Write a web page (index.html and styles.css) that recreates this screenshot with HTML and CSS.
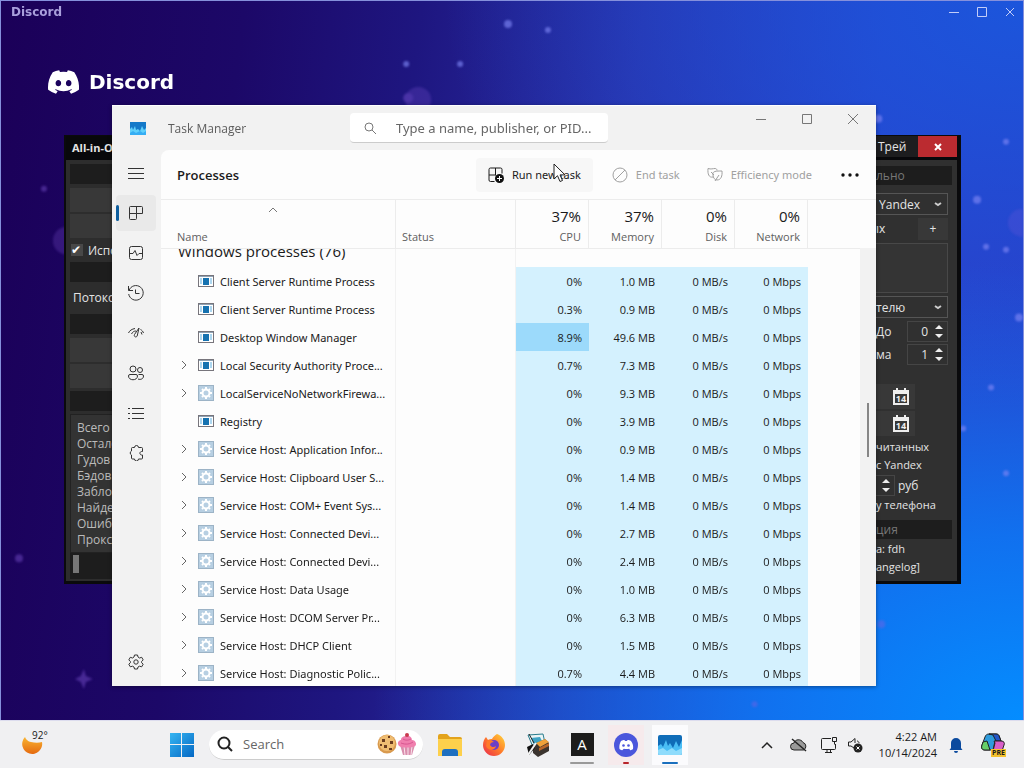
FILE: index.html
```html
<!DOCTYPE html>
<html lang="en">
<head>
    <meta charset="UTF-8">
    <meta name="viewport" content="width=device-width, initial-scale=1.0">
    <title>Desktop</title>
    <link rel="stylesheet" href="styles.css">
</head>
<body>
    <main class="desktop">
        <!-- Discord, maximised behind everything -->
        <section class="discord">
            <svg class="stars" viewBox="0 0 1024 720" preserveAspectRatio="none" aria-hidden="true">
                <g fill="#7f86f5" opacity="0.65">
                    <circle cx="508" cy="23" r="4"/><circle cx="548" cy="29" r="3"/>
                    <circle cx="406" cy="63" r="3"/><circle cx="460" cy="63" r="3"/>
                    <circle cx="879" cy="118" r="4"/><circle cx="1007" cy="141" r="3"/>
                    <circle cx="978" cy="199" r="4"/><circle cx="987" cy="246" r="3"/>
                    <circle cx="1007" cy="249" r="3"/><circle cx="1020" cy="317" r="4"/>
                    <circle cx="992" cy="387" r="3"/><circle cx="1007" cy="473" r="3"/>
                    <circle cx="964" cy="428" r="3"/>
                </g>
                <g fill="#8a5fe0" opacity="0.4">
                    <circle cx="43" cy="188" r="3"/><circle cx="18" cy="558" r="4"/>
                    <path d="M83 669l2 7 7 3-7 3-2 7-3-7-6-3 6-3z"/>
                    <circle cx="418" cy="99" r="13" opacity="0.6"/><circle cx="408" cy="97" r="5"/>
                    <circle cx="1023" cy="222" r="14" opacity="0.5"/>
                    <circle cx="66" cy="240" r="14" opacity="0.6"/>
                    <circle cx="882" cy="624" r="4"/><circle cx="755" cy="704" r="3"/>
                </g>
            </svg>
            <header class="discord-title">
                <span>Discord</span>
                <div class="discord-controls">
                    <button aria-label="Minimize"><svg width="12" height="12" viewBox="0 0 12 12"><path d="M1 6.5h10"/></svg></button>
                    <button aria-label="Maximize"><svg width="12" height="12" viewBox="0 0 12 12"><path d="M1.500 1.500h9v9h-9z"/></svg></button>
                    <button aria-label="Close"><svg width="12" height="12" viewBox="0 0 12 12"><path d="M2 2l8 8M10 2l-8 8"/></svg></button>
                </div>
            </header>
            <div class="discord-brand">
                <svg width="31" height="24" viewBox="0 0 127 96" fill="#fff"><path d="M107.700 8.070A105.150 105.150 0 0 0 81.470 0a72.060 72.060 0 0 0-3.360 6.830 97.680 97.680 0 0 0-29.110 0A72.370 72.370 0 0 0 45.640 0a105.890 105.890 0 0 0-26.250 8.090C2.790 32.650-1.710 56.600.54 80.210a105.730 105.730 0 0 0 32.170 16.150 77.700 77.700 0 0 0 6.890-11.110 68.420 68.420 0 0 1-10.850-5.180c.91-.66 1.800-1.340 2.660-2a75.570 75.570 0 0 0 64.320 0c.87.71 1.760 1.390 2.660 2a68.680 68.680 0 0 1-10.870 5.190 77 77 0 0 0 6.890 11.100 105.250 105.250 0 0 0 32.190-16.140c2.640-27.380-4.510-51.110-18.900-72.150zM42.450 65.690C36.180 65.690 31 60 31 53s5-12.740 11.430-12.740S54 46 53.890 53s-5.050 12.690-11.440 12.690zm42.240 0C78.410 65.690 73.250 60 73.250 53s5-12.740 11.440-12.740S96.230 46 96.120 53s-5.040 12.690-11.430 12.690z"/></svg>
                <span>Discord</span>
            </div>
        </section>

        <!-- All-in-One window -->
        <section class="aio">
            <header class="aio-title">
                <h2>All-in-One</h2>
                <div class="aio-actions">
                    <button class="aio-tray">Трей</button>
                    <button class="aio-close" aria-label="Закрыть"><svg width="8" height="8" viewBox="0 0 8 8"><path d="M1 1l6 6M7 1l-6 6" stroke="#fff" stroke-width="2"/></svg></button>
                </div>
            </header>
            <div class="aio-body">
                <div class="aio-left">
                    <div class="band"></div>
                    <button class="flat" aria-label="База"></button>
                    <button class="flat" aria-label="Прокси"></button>
                    <label class="aio-check"><input type="checkbox" checked>Использовать</label>
                    <div class="band"></div>
                    <div class="aio-label">Потоков</div>
                    <div class="band"></div>
                    <button class="flat" aria-label="Старт"></button>
                    <button class="flat" aria-label="Стоп"></button>
                    <div class="band last"></div>
                    <ul class="stats">
                        <li>Всего</li>
                        <li>Осталось</li>
                        <li>Гудов</li>
                        <li>Бэдов</li>
                        <li>Заблок</li>
                        <li>Найдено</li>
                        <li>Ошибок</li>
                        <li>Прокси</li>
                    </ul>
                    <div class="aio-progress"><span></span></div>
                </div>
                <div class="aio-right">
                    <div class="band">льно</div>
                    <div class="aio-select">
                        <select aria-label="Сервис"><option>Yandex</option></select>
                        <svg width="8" height="5" viewBox="0 0 8 5"><path d="M1 1l3 2 3-2"/></svg>
                    </div>
                    <div class="aio-row"><span>ıх</span><button class="flat plus">+</button></div>
                    <textarea class="aio-text" aria-label="Список"></textarea>
                    <div class="aio-select sort-by">
                        <select aria-label="Сортировка"><option>телю</option></select>
                        <svg width="8" height="5" viewBox="0 0 8 5"><path d="M1 1l3 2 3-2"/></svg>
                    </div>
                    <div class="aio-row">
                        <label for="till">До</label>
                        <span class="spin"><input id="till" type="text" value="0"><svg width="10" height="15" viewBox="0 0 10 15"><path d="M1 5l4-4 4 4zM1 10l4 4 4-4z"/></svg></span>
                    </div>
                    <div class="aio-row">
                        <label for="sum">ма</label>
                        <span class="spin"><input id="sum" type="text" value="1"><svg width="10" height="15" viewBox="0 0 10 15"><path d="M1 5l4-4 4 4zM1 10l4 4 4-4z"/></svg></span>
                    </div>
                    <div class="dates">
                        <button class="date" aria-label="Дата от"><svg width="16" height="17" viewBox="0 0 16 17"><path d="M1 3h14v13H1zM4 0v4M12 0v4" fill="none" stroke="#eee" stroke-width="2"/><path d="M1 3h14v3H1z" fill="#eee"/><text x="8" y="14">14</text></svg></button>
                        <button class="date" aria-label="Дата до"><svg width="16" height="17" viewBox="0 0 16 17"><path d="M1 3h14v13H1zM4 0v4M12 0v4" fill="none" stroke="#eee" stroke-width="2"/><path d="M1 3h14v3H1z" fill="#eee"/><text x="8" y="14">14</text></svg></button>
                    </div>
                    <div class="aio-line">читанных</div>
                    <div class="aio-line">с Yandex</div>
                    <div class="aio-row rub">
                        <span class="spin small"><svg width="10" height="15" viewBox="0 0 10 15"><path d="M1 5l4-4 4 4zM1 10l4 4 4-4z"/></svg></span>
                        <span>руб</span>
                    </div>
                    <div class="aio-line">у телефона</div>
                    <div class="band info">ция</div>
                    <div class="aio-line">а: fdh</div>
                    <a class="aio-line" href="#">angelog]</a>
                </div>
            </div>
        </section>

        <!-- Task Manager -->
        <section class="tm">
            <header class="tm-title">
                <svg class="tm-logo" width="16" height="13" viewBox="0 0 16 13"><rect width="16" height="13" fill="#1479c9"/><path d="M0 7l2-2 1 3 2-4 1 4 2-1 2 2 2-5 2 4 2-2v7H0z" fill="#5fd0fb"/><path d="M0 11l3-2 3 2 4-2 3 2 3-2v4H0z" fill="#36aef4"/></svg>
                <h1>Task Manager</h1>
                <label class="tm-search">
                    <svg width="12" height="12" viewBox="0 0 12 12"><circle cx="5" cy="5" r="4"/><path d="M8 8l4 4"/></svg>
                    <input type="text" placeholder="Type a name, publisher, or PID..." aria-label="Search processes">
                </label>
                <div class="tm-controls">
                    <button aria-label="Minimize"><svg width="12" height="12" viewBox="0 0 12 12"><path d="M1 6.500h10"/></svg></button>
                    <button aria-label="Maximize"><svg width="12" height="12" viewBox="0 0 12 12"><path d="M1.500 1.500h9v9h-9z"/></svg></button>
                    <button aria-label="Close"><svg width="12" height="12" viewBox="0 0 12 12"><path d="M1 1l10 10M11 1L1 11"/></svg></button>
                </div>
            </header>
            <div class="tm-body">
                <nav class="tm-nav">
                    <button aria-label="Menu"><svg width="16" height="16" viewBox="0 0 16 16"><path d="M0 3.500h16M0 8.500h16M0 13.500h16"/></svg></button>
                    <button class="active" aria-label="Processes"><svg width="16" height="16" viewBox="0 0 16 16"><path d="M2.500 1.500h11a1 1 0 0 1 1 1v6h-6v5a1 1 0 0 1-1 1h-5a1 1 0 0 1-1-1v-11a1 1 0 0 1 1-1zM8.500 1.500v7M1.500 8.500h7"/></svg></button>
                    <button aria-label="Performance"><svg width="16" height="16" viewBox="0 0 16 16"><rect x="1.500" y="1.500" width="13" height="13" rx="2"/><path d="M2 8.500h3l2-3 2 5 2-2h3"/></svg></button>
                    <button aria-label="App history"><svg width="16" height="16" viewBox="0 0 16 16"><path d="M.5 1v4.500H5M1 5.500a7.300 7.300 0 1 1-.3 3.500M7.500 4.500v4h4"/></svg></button>
                    <button aria-label="Startup apps"><svg width="16" height="16" viewBox="0 0 16 16"><path d="M.5 8C1.500 5.500 4 4 7 3.500M12.500 4.500C14 5.300 15 6.500 15.500 8M3.500 9C4.500 7 6 6 8 6M13 7l1 2.500M11 3L6.500 9.500c-1 2 1.500 3.500 2.700 1.500z"/></svg></button>
                    <button aria-label="Users"><svg width="16" height="16" viewBox="0 0 16 16"><circle cx="5" cy="4" r="3"/><circle cx="12" cy="5" r="2.500"/><path d="M.5 11a1.500 1.500 0 0 1 1.500-1.500h6A1.500 1.500 0 0 1 9.500 11c0 5-9 5-9 0zM10.500 9.500H14a1.500 1.500 0 0 1 1.500 1.500c0 3-3 4-5.500 3"/></svg></button>
                    <button aria-label="Details"><svg width="16" height="16" viewBox="0 0 16 16"><path d="M4 3.500h12M4 8.500h12M4 13.500h12M0 3.500h2M0 8.500h2M0 13.500h2"/></svg></button>
                    <button aria-label="Services"><svg width="16" height="16" viewBox="0 0 16 16"><path d="M6.500 2.500a2 2 0 0 1 4 0h3a1 1 0 0 1 1 1v3c-3.500-.5-3.500 4 0 3.500v3a1 1 0 0 1-1 1h-3a2 2 0 0 1-4 0h-2a1 1 0 0 1-1-1v-3a2.200 2.200 0 0 1 0-4V3.500a1 1 0 0 1 1-1z"/></svg></button>
                    <button class="settings" aria-label="Settings"><svg width="16" height="16" viewBox="0 0 16 16"><path d="M6.500 1h3l.5 2 1.500 1 2.200-.7 1.500 2.600L13.600 7.500v1.200l1.600 1.500-1.500 2.600-2.200-.6-1.500.8-.5 2h-3L6 13l-1.500-.8-2.200.6-1.500-2.600 1.600-1.500V7.500L.8 5.900l1.500-2.600L4.500 4 6 3z"/><circle cx="8" cy="8" r="2.200"/></svg></button>
                </nav>
                <div class="tm-main">
                    <div class="tm-toolbar">
                        <h2>Processes</h2>
                        <button class="run">
                            <svg width="16" height="16" viewBox="0 0 16 16"><path d="M6.500 14.500h-4a1.500 1.500 0 0 1-1.500-1.500V2.500A1.500 1.500 0 0 1 2.500 1h10A1.500 1.500 0 0 1 14 2.500v4M7.500 1v7M1 8h7"/><circle cx="11.500" cy="11.500" r="4.500" fill="#111" stroke="none"/><path d="M9 11.500h5M11.500 9v5" stroke="#fff"/></svg>
                            Run new task
                        </button>
                        <button disabled>
                            <svg width="16" height="16" viewBox="0 0 16 16"><circle cx="8" cy="8" r="7"/><path d="M3 13L13 3"/></svg>
                            End task
                        </button>
                        <button disabled>
                            <svg width="16" height="16" viewBox="0 0 16 16"><path d="M6 10C2 11 .5 7 1 1.500c3 1 5 0 7 0 1 0 2 .5 2 2M6 8c-1-4 3-4 9-4 .5 5-1 9-5 9-2 0-4-2-4-5zM8 14l4-6M4 5l3 3"/></svg>
                            Efficiency mode
                        </button>
                        <button class="more" aria-label="More options"><svg width="18" height="4" viewBox="0 0 18 4"><circle cx="2" cy="2" r="1.700"/><circle cx="9" cy="2" r="1.700"/><circle cx="16" cy="2" r="1.700"/></svg></button>
                    </div>
                    <div class="tm-list">
                        <table>
                            <thead>
                                <tr>
                                    <th class="col-name"><svg class="sort" width="10" height="6" viewBox="0 0 10 6"><path d="M1 5l4-4 4 4"/></svg><small>Name</small></th>
                                    <th class="col-status"><small>Status</small></th>
                                    <th class="num"><b>37%</b><small>CPU</small></th>
                                    <th class="num"><b>37%</b><small>Memory</small></th>
                                    <th class="num"><b>0%</b><small>Disk</small></th>
                                    <th class="num"><b>0%</b><small>Network</small></th>
                                    <th class="rest"></th>
                                </tr>
                            </thead>
                            <tbody id="processes">
                                <tr class="group">
                                    <td><div class="group-name"><span>Windows processes (76)</span></div></td>
                                    <td></td><td></td><td></td><td></td><td></td><td></td>
                                </tr>
                            </tbody>
                        </table>
                        <div class="scrollbar"><span></span></div>
                    </div>
                </div>
            </div>
        </section>

        <svg class="cursor" width="13" height="20" viewBox="0 0 13 20"><path d="M1 1v15l3.500-3.300L7 18.500l2.500-1-2.500-5.600h5z" fill="#fff" stroke="#222"/></svg>
    </main>

    <footer class="taskbar">
        <button class="weather" aria-label="Weather 92 degrees">
            <svg width="22" height="22" viewBox="0 0 22 22"><defs><linearGradient id="sun" x2="0" y2="1"><stop offset="0" stop-color="#f9b532"/><stop offset="1" stop-color="#e56a10"/></linearGradient></defs><path d="M3 3a8 8 0 0 0 6 5c4 1 8 1 11 0a10 10 0 1 1-17-5z" fill="url(#sun)"/></svg>
            <span>92°</span>
        </button>
        <div class="apps">
            <button aria-label="Start"><svg width="24" height="24" viewBox="0 0 24 24"><defs><linearGradient id="win" x2="1" y2="1"><stop offset="0" stop-color="#35b5f2"/><stop offset="1" stop-color="#0568c4"/></linearGradient></defs><path d="M0 0h11v11H0zM12 0h12v11H12zM0 12h11v12H0zM12 12h12v12H12z" fill="url(#win)"/></svg></button>
            <label class="search">
                <svg width="16" height="16" viewBox="0 0 16 16"><circle cx="7" cy="7" r="5.500"/><path d="M11 11l4 4"/></svg>
                <input type="text" placeholder="Search" aria-label="Search">
                <svg class="treats" width="40" height="24" viewBox="0 0 40 24">
                    <circle cx="10" cy="12" r="9.500" fill="#d99a4e"/><circle cx="10" cy="11" r="8" fill="#efbd72"/>
                    <path d="M5 7h3v3H5zM11 4h2v2h-2zM13 9h3v3h-3zM7 13h3v3H7zM12 16h3v2h-3zM3 12h2v2H3z" fill="#6b3d1f"/>
                    <path d="M23 13h15l-3 10h-9z" fill="#d98fae"/><path d="M27 14l1 9M31 14v9M35 14l-1 9" stroke="#fbe2ea"/>
                    <path d="M22 14c-3-4 1-6 2-6 0-3 3-4 5-4 3-1 6 1 6 4 4 0 5 5 3 6-4 2-12 2-16 0z" fill="#f07fae"/><path d="M24 11c5 2 9 1 12-1M26 7c3 2 6 1 8 0" stroke="#d85590" fill="none"/><circle cx="30" cy="3" r="2" fill="#c83a4e"/>
                </svg>
            </label>
            <button aria-label="File Explorer"><svg width="26" height="24" viewBox="0 0 26 24"><path d="M1 3a2 2 0 0 1 2-2h7l3 3h10a2 2 0 0 1 2 2v16H1z" fill="#e3a31c"/><path d="M1 6h24v17H1z" fill="#fdd04c"/><path d="M5 23v-4a3 3 0 0 1 3-3h10a3 3 0 0 1 3 3v4z" fill="#1d6fc0"/></svg></button>
            <button aria-label="Firefox"><svg width="24" height="24" viewBox="0 0 24 24"><defs><linearGradient id="fox" x1="1" x2="0" y2="1"><stop offset="0" stop-color="#ffd93b"/><stop offset="0.500" stop-color="#ff7a2a"/><stop offset="1" stop-color="#e8264f"/></linearGradient></defs><path d="M15 1c5 2 8 6 8 11a11 11 0 0 1-22 0c0-3 1-6 3-8l2 3c1-1 3-1 4-1 1-2 3-4 5-5z" fill="url(#fox)"/><circle cx="12" cy="12" r="5" fill="#6b3fc6"/><path d="M5 8c3-2 6 0 7 1-2 0-4 1-4 3 1 2 4 3 6 1-1 5-8 5-10 0z" fill="#ff7a2a"/></svg></button>
            <button aria-label="Tools"><svg width="24" height="24" viewBox="0 0 24 24"><path d="M2 2l15-1 2 9-12 4z" fill="#e9f4f6" stroke="#287c8d"/><path d="M5 5l9-1 2 4-8 4z" fill="#3fa3c4"/><path d="M7 12l12-6 4 4v8l-11 6-5-4z" fill="#3b342f"/><path d="M10 10l9-4 4 3-9 5z" fill="#f0a13a"/><path d="M13 15l10-5v3l-10 5z" fill="#b76529"/><path d="M1 14l6-3 2 4-6 7z" fill="#111"/><path d="M2 22l8-12" stroke="#f4f4f4" stroke-width="2"/><path d="M3 1l5 9" stroke="#222"/></svg></button>
            <button class="open" aria-label="All-in-One"><span class="a-icon">A</span></button>
            <button class="open alert" aria-label="Discord"><svg width="24" height="24" viewBox="0 0 24 24"><circle cx="12" cy="12" r="12" fill="#4b56dc"/><path d="M7 8c2-1 3-1.300 3.500-1l.5 1h2l.5-1c.5-.3 2 0 3.500 1 2 3 2.500 5 2 8-1 1-2.500 1.500-3 1l-.8-1.300c-2 .5-3.400.5-5.400 0L8.500 17c-.5.500-2 0-3-1-.5-3 0-5 1.500-8z" fill="#fff"/><circle cx="9.500" cy="12.500" r="1.300" fill="#4b56dc"/><circle cx="14.500" cy="12.500" r="1.300" fill="#4b56dc"/></svg></button>
            <button class="open current" aria-label="Task Manager"><svg width="24" height="20" viewBox="0 0 24 20"><rect width="24" height="20" rx="2" fill="#0f6cb8"/><path d="M0 11l3-2 2 3 3-7 2 6 2-3 3 5 3-7 3 6 3-7v13a2 2 0 0 1-2 2H2a2 2 0 0 1-2-2z" fill="#49bdf5"/><path d="M0 15l5-2 4 3 5-3 4 3 6-3v5a2 2 0 0 1-2 2H2a2 2 0 0 1-2-2z" fill="#8fdcfc"/></svg></button>
        </div>
        <div class="tray">
            <button class="hidden-icons" aria-label="Show hidden icons"><svg width="12" height="8" viewBox="0 0 12 8"><path d="M1 7l5-5 5 5" stroke-width="1.500"/></svg></button>
            <button class="cloud" aria-label="OneDrive"><svg width="18" height="14" viewBox="0 0 18 14"><path d="M4 12a3.500 3.500 0 0 1 0-7c1-4 7-4.500 9-.5a4 4 0 0 1 .5 7.500z" fill="#999"/><path d="M2 1l14 12" stroke-width="1.500"/></svg></button>
            <button aria-label="Network"><svg width="18" height="18" viewBox="0 0 18 18"><path d="M11 2.500H2.500a1 1 0 0 0-1 1v9a1 1 0 0 0 1 1h12a1 1 0 0 0 1-1V8M5 16.500h7M7 13.500v3M10.500 13.500v3M12.500 1.500h4v4h-4zM14.500 5.500v3"/></svg></button>
            <button class="volume" aria-label="Volume muted"><svg width="16" height="16" viewBox="0 0 16 16"><path d="M7 11L4 9H1.500V5H4l4-3.500V6M10 4c1 0 2 1 2 2"/><circle cx="11" cy="11" r="4.500" fill="#222" stroke="none"/><path d="M9.500 9.500l3 3M12.500 9.500l-3 3" stroke="#fff"/></svg></button>
            <div class="clock"><time>4:22 AM</time><time>10/14/2024</time></div>
            <button class="bell" aria-label="Notifications"><svg width="14" height="16" viewBox="0 0 14 16"><path d="M2 11V6a5 5 0 0 1 10 0v5l1.500 2H.5zM5 14h4a2 2 0 0 1-4 0z" fill="#0b4a9e" stroke="none"/></svg></button>
            <button class="copilot" aria-label="Copilot preview">
                <svg width="24" height="24" viewBox="0 0 24 24" stroke="none"><path d="M8 1h7c2 0 3 1 3.500 3L20 8h-6l-2 9H4c-3 0-4-2-3-5l3-8c.6-2 2-3 4-3z" fill="#2f9bdc"/><path d="M8 1h7c2 0 3 1 3.500 3L20 8h-5L12 2z" fill="#2456c8"/><path d="M2 9l4-1 3 9H4c-3 0-4-2-3-5z" fill="#67cf68"/><path d="M13 8h7c3 0 4 2 3 4l-2 6h-9l2-8z" fill="#d85fc8"/></svg>
                <span>PRE</span>
            </button>
        </div>
    </footer>

    <script>
        // name, icon, expandable, cpu, memory
        const processes = [
            ["Client Server Runtime Process", "app", false, "0%", "1.0 MB"],
            ["Client Server Runtime Process", "app", false, "0.3%", "0.9 MB"],
            ["Desktop Window Manager", "app", false, "8.9%", "49.6 MB"],
            ["Local Security Authority Proce...", "app", true, "0.7%", "7.3 MB"],
            ["LocalServiceNoNetworkFirewa...", "gear", true, "0%", "9.3 MB"],
            ["Registry", "app", false, "0%", "3.9 MB"],
            ["Service Host: Application Infor...", "gear", true, "0%", "0.9 MB"],
            ["Service Host: Clipboard User S...", "gear", true, "0%", "1.4 MB"],
            ["Service Host: COM+ Event Sys...", "gear", true, "0%", "1.4 MB"],
            ["Service Host: Connected Devi...", "gear", true, "0%", "2.7 MB"],
            ["Service Host: Connected Devi...", "gear", true, "0%", "2.4 MB"],
            ["Service Host: Data Usage", "gear", true, "0%", "1.0 MB"],
            ["Service Host: DCOM Server Pr...", "gear", true, "0%", "6.3 MB"],
            ["Service Host: DHCP Client", "gear", true, "0%", "1.5 MB"],
            ["Service Host: Diagnostic Polic...", "gear", true, "0.7%", "4.4 MB"]
        ];

        const icons = {
            app: '<svg width="16" height="12" viewBox="0 0 16 12"><rect x="0.5" y="0.5" width="15" height="11" fill="#fff" stroke="#77757c"/><path d="M1 1h14v1H1z" fill="#8fa3b5"/><path d="M5 3h6v7H5z" fill="#1672b0"/><path d="M2 4h2M2 6h2M2 8h2M12 4h2M12 6h2M12 8h2" stroke="#5aaee0"/></svg>',
            gear: '<svg width="16" height="16" viewBox="0 0 16 16"><rect x="0.5" y="0.5" width="15" height="15" fill="#b7cfe2" stroke="#9cb3c6"/><circle cx="8" cy="8" r="3.5" fill="none" stroke="#fff" stroke-width="2"/><path d="M8 2v2M8 12v2M2 8h2M12 8h2M4 4l1 1M11 11l1 1M12 4l-1 1M4 12l1-1" stroke="#fff" stroke-width="2"/></svg>'
        };
        const chevron = '<svg width="6" height="10" viewBox="0 0 6 10"><path d="M1 1l4 4-4 4" fill="none" stroke="#666"/></svg>';

        const body = document.getElementById('processes');
        processes.forEach(([name, icon, expandable, cpu, memory]) => {
            const row = document.createElement('tr');
            row.innerHTML = `
                <td><div class="process">
                    <span class="expand">${expandable ? chevron : ''}</span>
                    <span class="icon">${icons[icon]}</span>
                    <span>${name}</span>
                </div></td>
                <td></td>
                <td class="usage ${parseFloat(cpu) > 5 ? 'high' : ''}">${cpu}</td>
                <td class="usage">${memory}</td>
                <td class="usage">0 MB/s</td>
                <td class="usage">0 Mbps</td>
                <td></td>`;
            body.appendChild(row);
        });
    </script>
</body>
</html>
```
FILE: styles.css
```css
* {
    box-sizing: border-box;
}
body {
    margin: 0;
    height: 100vh;
    display: flex;
    flex-direction: column;
    overflow: hidden;
    font-family: "Open Sans", "Noto Sans", sans-serif;
    font-size: 12px;
    color: #1a1a1a;
}
button {
    font: inherit;
    color: inherit;
    border: none;
    background: none;
    padding: 0;
}
input, select, textarea {
    font: inherit;
    color: inherit;
    border: none;
    background: none;
    padding: 0;
    outline: none;
    min-width: 0;
}
h1, h2, ul {
    margin: 0;
    padding: 0;
    font-weight: normal;
}
svg {
    display: block;
    flex-shrink: 0;
}
.desktop {
    flex: 1;
    position: relative;
    min-height: 0;
}

/* Discord */
.discord {
    height: 100%;
    position: relative;
    border: 1px solid #8590dc;
    border-bottom: none;
    background:
        radial-gradient(ellipse at 100% 100%, #048dff 0%, rgba(12, 122, 246, 0.85) 18%, rgba(30, 80, 220, 0) 45%),
        radial-gradient(ellipse at 100% 0%, rgba(26, 88, 222, 0.9) 0%, rgba(36, 72, 220, 0) 40%),
        linear-gradient(97deg, #1b0058 0%, #1c0868 22%, #1e1680 38%, #2a30aa 58%, #2b3ec8 80%, #2b3cc6 100%);
}
.stars {
    position: absolute;
    inset: 0;
    width: 100%;
    height: 100%;
    filter: blur(1px);
}
.discord-title {
    position: relative;
    display: flex;
    justify-content: space-between;
    align-items: center;
    height: 21px;
    padding: 0 7px 0 10px;
    font: bold 12px "DejaVu Sans", sans-serif;
    color: #a99fdc;
}
.discord-controls {
    display: flex;
    gap: 16px;
}
.discord-controls svg {
    fill: none;
    stroke: #c3cdf8;
}
.discord-brand {
    position: relative;
    display: flex;
    align-items: center;
    gap: 10px;
    margin: 48px 0 0 47px;
    font: bold 20px "DejaVu Sans", sans-serif;
    color: #fff;
}

/* All-in-One */
.aio {
    position: absolute;
    top: 135px;
    right: 63px;
    bottom: 136px;
    left: 64px;
    display: flex;
    flex-direction: column;
    background: #2d2d2d;
    border: 2px solid #0a0a0c;
    border-width: 1px 4px 3px 2px;
    color: #e4e4e4;
}
.aio-title {
    display: flex;
    justify-content: space-between;
    height: 24px;
    background: #08080b;
}
.aio-title h2 {
    padding-left: 6px;
    font-size: 11px;
    font-weight: bold;
    line-height: 24px;
}
.aio-actions {
    display: flex;
    height: 21px;
}
.aio-tray {
    width: 42px;
    padding-left: 2px;
    text-align: left;
    background: #1d1d1f;
}
.aio-close {
    width: 39px;
    background: #bb2b30;
    display: flex;
    align-items: center;
    justify-content: center;
}
.aio-body {
    flex: 1;
    display: flex;
    justify-content: space-between;
    min-height: 0;
}
.aio-left {
    width: 120px;
    padding: 4px 0 0 4px;
    display: flex;
    flex-direction: column;
}
.band {
    height: 20px;
    flex-shrink: 0;
    line-height: 20px;
    background: #1d1d1d;
    color: #777;
}
.band.last {
    margin-top: 3px;
}
.flat {
    height: 24px;
    margin-top: 2px;
    flex-shrink: 0;
    background: #383838;
}
.aio-left .band + .flat {
    margin-top: 4px;
}
.aio-check {
    display: flex;
    align-items: center;
    gap: 5px;
    height: 24px;
    padding-left: 1px;
}
.aio-check input {
    appearance: none;
    width: 12px;
    height: 12px;
    flex-shrink: 0;
    margin: 0;
    background: #484848;
}
.aio-check input:checked::before {
    content: "✔";
    display: block;
    font: 12px/12px "DejaVu Sans", sans-serif;
    color: #fff;
}
.aio-label {
    height: 32px;
    line-height: 32px;
    padding-left: 3px;
}
.stats {
    list-style: none;
    margin-top: 3px;
    padding: 5px 0 4px 6px;
    background: #333;
    border: 1px solid #222;
    color: #bbb;
    line-height: 16px;
}
.aio-progress {
    height: 26px;
    padding: 2px 3px;
    background: #1d1d1d;
}
.aio-progress span {
    display: block;
    width: 6px;
    height: 18px;
    background: #777;
}
.aio-right {
    width: 81px;
    padding: 6px 9px 0 0;
    display: flex;
    flex-direction: column;
    background: #303030;
}
.aio-right .band {
    margin-right: -4px;
    height: 19px;
}
.aio-select {
    display: flex;
    align-items: center;
    height: 22px;
    margin-top: 8px;
    padding-right: 5px;
    border: 1px solid #555;
    border-left: none;
}
.aio-select select {
    flex: 1;
    appearance: none;
    padding-left: 3px;
}
.aio-select.sort-by select {
    padding-left: 0;
}
.aio-select svg {
    fill: none;
    stroke: #ccc;
    stroke-width: 2;
}
.aio-row {
    display: flex;
    justify-content: space-between;
    align-items: center;
    height: 21px;
    margin-top: 2px;
}
.aio-select + .aio-row {
    margin-top: 3px;
}
.plus {
    width: 30px;
    height: 22px;
    margin: 0;
}
.aio-text {
    height: 50px;
    margin-top: 4px;
    resize: none;
    background: #343434;
    border: 1px solid #484848;
    border-left: none;
}
.aio-text + .aio-select {
    margin-top: 3px;
}
.spin {
    display: flex;
    align-items: center;
    justify-content: flex-end;
    gap: 6px;
    width: 41px;
    height: 21px;
    padding-right: 3px;
    border: 1px solid #454545;
}
.spin input {
    width: 8px;
    text-align: right;
}
.spin svg {
    fill: #eee;
}
.dates {
    display: flex;
    flex-direction: column;
    gap: 2px;
    margin-top: 19px;
}
.date {
    width: 39px;
    height: 25px;
    padding-left: 17px;
    background: #383838;
}
.date text {
    font: bold 9px "Open Sans", sans-serif;
    fill: #eee;
    text-anchor: middle;
}
.aio-line {
    font-size: 11px;
    line-height: 18px;
    white-space: nowrap;
    color: inherit;
    text-decoration: none;
}
.dates + .aio-line {
    margin-top: 2px;
}
.aio-row.rub {
    justify-content: flex-start;
    gap: 3px;
    margin-top: 1px;
}
.spin.small {
    width: 19px;
    border-left: none;
}
.aio-right .info {
    margin: 6px -4px 1px 0;
}

/* Task Manager */
.tm {
    position: absolute;
    top: 105px;
    right: 148px;
    bottom: 34px;
    left: 112px;
    display: flex;
    flex-direction: column;
    background: #f2f2f2;
    border-top: 1px solid #fff;
    box-shadow: 0 1px 4px rgba(0, 0, 0, 0.4);
}
.tm-title {
    display: flex;
    align-items: center;
    height: 44px;
    padding-left: 18px;
    color: #5c5c5c;
}
.tm-title h1 {
    width: 182px;
    margin-left: 22px;
    font-size: 12px;
}
.tm-search {
    display: flex;
    align-items: center;
    gap: 20px;
    width: 258px;
    height: 30px;
    padding: 0 14px;
    background: #fff;
    border-radius: 4px;
    border-bottom: 1px solid #ccc;
}
.tm-search svg {
    fill: none;
    stroke: #777;
}
.tm-search input {
    flex: 1;
    font-family: "Noto Sans", sans-serif;
    font-size: 13px;
}
input::placeholder {
    color: #666;
    opacity: 1;
}
.tm-controls {
    display: flex;
    gap: 34px;
    margin: -18px 17px 0 auto;
}
.tm-controls svg {
    fill: none;
    stroke: #777;
}
.tm-body {
    flex: 1;
    display: flex;
    min-height: 0;
}
.tm-nav {
    width: 49px;
    display: flex;
    flex-direction: column;
    gap: 4px;
    padding: 5px 4px 6px;
}
.tm-nav button {
    position: relative;
    display: flex;
    align-items: center;
    justify-content: center;
    width: 40px;
    height: 36px;
    border-radius: 4px;
}
.tm-nav svg {
    fill: none;
    stroke: #333;
}
.tm-nav .active {
    background: #e9e9e9;
}
.tm-nav .active::before {
    content: "";
    position: absolute;
    left: 0;
    top: 10px;
    width: 3px;
    height: 16px;
    border-radius: 2px;
    background: #0f5f9f;
}
.tm-nav .settings {
    margin-top: auto;
}
.tm-main {
    flex: 1;
    min-width: 0;
    display: flex;
    flex-direction: column;
    background: #fdfdfd;
    border-top-left-radius: 8px;
}
.tm-toolbar {
    display: flex;
    align-items: center;
    gap: 3px;
    height: 49px;
    padding: 0 5px 0 16px;
}
.tm-toolbar h2 {
    margin-right: auto;
    font-size: 13px;
    font-weight: 600;
}
.tm-toolbar button {
    display: flex;
    align-items: center;
    gap: 8px;
    height: 34px;
    padding: 0 12px;
    border-radius: 4px;
    white-space: nowrap;
    font-family: "Noto Sans", sans-serif;
    font-size: 11px;
}
.tm-toolbar button:disabled {
    color: #a0a0a0;
}
.tm-toolbar svg {
    fill: none;
    stroke: currentColor;
}
.tm-toolbar .run {
    margin-right: 4px;
    background: #f7f7f7;
}
.tm-toolbar .more {
    margin-left: 2px;
}
.tm-toolbar .more svg {
    fill: #111;
    stroke: none;
}
.tm-list {
    flex: 1;
    position: relative;
    min-height: 0;
    overflow: hidden;
}
table {
    width: 100%;
    table-layout: fixed;
    border-collapse: separate;
    border-spacing: 0;
    font-size: 11px;
}
th {
    width: 73px;
    height: 50px;
    padding: 0 6px 3px;
    vertical-align: bottom;
    text-align: left;
    font-weight: normal;
    border: solid #ececec;
    border-width: 1px 1px 1px 0;
}
th b, th small {
    display: block;
    font-size: 11px;
    font-weight: normal;
    line-height: 16px;
    color: #606060;
}
th b {
    font-size: 15px;
    line-height: 26px;
    color: #1a1a1a;
}
th.num {
    padding-right: 7px;
    text-align: right;
}
th.col-name {
    width: 235px;
    padding: 0 26px 3px 16px;
}
th.col-status {
    width: 120px;
}
th.rest {
    width: auto;
    border-right: none;
}
.sort {
    margin: 0 auto 16px;
    fill: none;
    stroke: #777;
}
td {
    height: 28px;
    padding: 0 7px;
    white-space: nowrap;
}
td:nth-child(1), td:nth-child(2) {
    border-right: 1px solid #f2f2f2;
}
td:first-child {
    padding: 0 0 0 17px;
}
.group td {
    height: 18px;
}
.group-name {
    display: flex;
    align-items: flex-end;
    height: 18px;
    overflow: hidden;
    font-size: 15px;
    line-height: 32px;
}
.process {
    display: flex;
    align-items: center;
    font-family: "Noto Sans", sans-serif;
}
.expand {
    width: 20px;
    padding-left: 3px;
}
.icon {
    width: 22px;
}
.usage {
    text-align: right;
    background: #d4f1fe;
}
.usage.high {
    background: #9cdafb;
}
.scrollbar {
    position: absolute;
    top: 49px;
    right: 0;
    bottom: 0;
    width: 16px;
    padding: 155px 7px 0;
    background: #f2f2f2;
}
.scrollbar span {
    display: block;
    width: 2px;
    height: 54px;
    background: #868686;
}
.cursor {
    position: absolute;
    top: 163px;
    left: 553px;
}

/* Taskbar */
.taskbar {
    display: flex;
    align-items: center;
    height: 48px;
    padding: 0 19px 0 22px;
    background: #f0f0f2;
    border-top: 1px solid #dcdcee;
}
.weather {
    position: relative;
    width: 138px;
}
.weather span {
    position: absolute;
    top: -6px;
    left: 10px;
    font-size: 10px;
    line-height: 14px;
}
.apps {
    display: flex;
    align-items: center;
}
.apps button {
    position: relative;
    display: flex;
    align-items: center;
    justify-content: center;
    width: 44px;
    height: 40px;
}
.search {
    display: flex;
    align-items: center;
    width: 214px;
    height: 30px;
    margin: 0 5px 0 5px;
    padding: 0 6px 0 8px;
    background: #fff;
    border-radius: 15px;
    border-bottom: 1px solid #ccc;
}
.search > svg:first-child {
    fill: none;
    stroke: #222;
    stroke-width: 2;
}
.search input {
    flex: 1;
    margin-left: 10px;
    font-size: 13px;
}
.a-icon {
    width: 23px;
    height: 23px;
    line-height: 23px;
    background: #1c1c1c;
    color: #fff;
    font-size: 15px;
}
.apps .open::after {
    content: "";
    position: absolute;
    bottom: 1px;
    left: 10px;
    right: 10px;
    height: 2px;
    border-radius: 1px;
    background: #999;
}
.apps .alert::after {
    left: 19px;
    right: 19px;
    background: #b8262c;
}
.apps .alert {
    background: #f6eaec;
    background-clip: content-box;
    padding: 0 4px;
}
.apps .current {
    padding: 0 4px;
    background: #fbfbfd content-box;
}
.apps .current::after {
    left: 14px;
    right: 14px;
    background: #1a6fbd;
}
.tray {
    display: flex;
    align-items: center;
    gap: 12px;
    margin-left: auto;
}
.tray svg {
    fill: none;
    stroke: #222;
}
.hidden-icons {
    margin-right: 5px;
}
.volume {
    margin: 0 4px 0 -3px;
}
.clock {
    display: flex;
    flex-direction: column;
    text-align: right;
    font-size: 11px;
    line-height: 16px;
}
.copilot {
    position: relative;
    margin-left: 6px;
}
.copilot span {
    position: absolute;
    right: -1px;
    bottom: 0;
    padding: 0 1px;
    background: #f5c12e;
    font-size: 7px;
    font-weight: bold;
    line-height: 8px;
}
```
